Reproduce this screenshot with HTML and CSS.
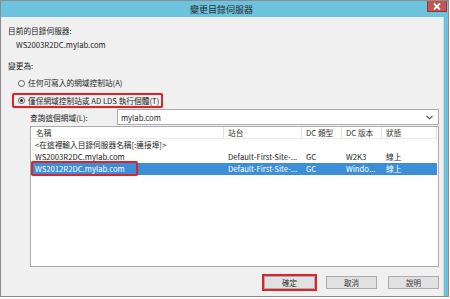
FILE: index.html
```html
<!DOCTYPE html>
<html lang="zh-Hant">
<head>
    <meta charset="UTF-8">
    <title>變更目錄伺服器</title>
    <link rel="stylesheet" href="styles.css">
</head>
<body>

<div class="window">
    <!-- Title bar -->
    <div class="titlebar">
        <span class="title">變更目錄伺服器</span>
        <span class="close">
            <svg width="8" height="7" viewBox="0 0 8 7"><path d="M1 0.5 L7 6.5 M7 0.5 L1 6.5" stroke="#fff" stroke-width="1.8"/></svg>
        </span>
    </div>

    <div class="frame">
        <div class="content">
            <div class="label first">目前的目錄伺服器:</div>
            <div class="label server">WS2003R2DC.mylab.com</div>
            <div class="label change">變更為:</div>

            <div class="radio">
                <span class="dot"></span>任何可寫入的網域控制站(A)
            </div>
            <div class="radio picked marked">
                <span class="dot on"></span>僅保網域控制站或 AD LDS 執行個體(T)
            </div>

            <div class="domain">
                <span class="domain-label">查詢這個網域(L):</span>
                <div class="combo">
                    <span>mylab.com</span>
                    <svg width="7" height="5" viewBox="0 0 7 5"><path d="M0.5 0.8 L3.5 3.8 L6.5 0.8" stroke="#444" stroke-width="1.1" fill="none"/></svg>
                </div>
            </div>

            <!-- Server list -->
            <div class="list">
                <div class="row head">
                    <span>名稱</span>
                    <span>站台</span>
                    <span>DC 類型</span>
                    <span>DC 版本</span>
                    <span>狀態</span>
                </div>
                <div class="row">
                    <span class="wide">&lt;在這裡輸入目錄伺服器名稱[:連接埠]&gt;</span>
                </div>
                <div class="row">
                    <span>WS2003R2DC.mylab.com</span>
                    <span>Default-First-Site-...</span>
                    <span>GC</span>
                    <span>W2K3</span>
                    <span>線上</span>
                </div>
                <div class="row selected">
                    <span><em class="marked name-mark">WS2012R2DC.mylab.com</em></span>
                    <span>Default-First-Site-...</span>
                    <span>GC</span>
                    <span>Windo...</span>
                    <span>線上</span>
                </div>
            </div>

            <div class="buttons">
                <button class="ok">確定</button>
                <button>取消</button>
                <button>說明</button>
            </div>
        </div>
        <div class="edge"></div>
    </div>
</div>

</body>
</html>
```

FILE: styles.css
```css
body {
    margin: 0;
    background: #fff;
    font-family: "Noto Sans CJK TC", "Noto Sans", sans-serif;
    font-size: 7.7px;
    color: #1e1e1e;
}
.window {
    width: 449px;
    height: 297px;
    border: 1px solid #8c8c8c;
    box-sizing: border-box;
    display: flex;
    flex-direction: column;
}
.titlebar {
    height: 16px;
    background: #6bc3de;
    display: flex;
    align-items: center;
    justify-content: center;
    position: relative;
}
.title {
    font-size: 9px;
    color: #2a2a2a;
    margin-left: -6px;
}
.close {
    position: absolute;
    right: 1px;
    top: 0;
    width: 20px;
    height: 11px;
    background: #c75450;
    border: 1px solid #8e3b38;
    border-top: none;
    box-sizing: border-box;
    display: flex;
    align-items: center;
    justify-content: center;
}
.frame {
    flex: 1;
    display: flex;
}
.content {
    flex: 1;
    background: #f0f0f0;
    padding: 0 4px 0 7px;
    display: flex;
    flex-direction: column;
    border-right: 1px solid #d9d9d9;
}
.edge {
    width: 5px;
    background: #6bc3de;
}
.label {
    line-height: 12px;
}
.first { margin-top: 8px; }
.server { margin-top: 2px; padding-left: 8px; }
.change { margin-top: 9px; }

.radio {
    margin-top: 5px;
    padding-left: 10px;
    line-height: 12px;
    display: flex;
    align-items: center;
    white-space: nowrap;
}
.dot {
    width: 7px;
    height: 7px;
    border: 1px solid #555;
    border-radius: 50%;
    background: #fff;
    box-sizing: border-box;
    margin-right: 3px;
    position: relative;
}
.dot.on::after {
    content: "";
    position: absolute;
    left: 1px;
    top: 1px;
    width: 3px;
    height: 3px;
    border-radius: 50%;
    background: #222;
}
.marked {
    border: 2px solid #d8262c;
    border-radius: 2px;
    box-shadow: 0 0 1px rgba(120, 0, 0, 0.5);
}
.radio.picked {
    margin-top: 4px;
    margin-left: 4px;
    padding-left: 4px;
    width: 151px;
    height: 15px;
    box-sizing: border-box;
    line-height: 11px;
}

.domain {
    margin-top: 1px;
    margin-left: 22px;
    height: 16px;
    display: flex;
    align-items: center;
}
.domain-label {
    width: 87px;
}
.combo {
    flex: 1;
    height: 16px;
    background: #fff;
    border: 1px solid #abadb3;
    box-sizing: border-box;
    display: flex;
    align-items: center;
    justify-content: space-between;
    padding: 0 5px 0 3px;
}

.list {
    margin-top: 1px;
    margin-left: 22px;
    height: 141px;
    background: #fff;
    border: 1px solid #abadb3;
    box-sizing: border-box;
}
.row {
    display: grid;
    grid-template-columns: 193px 78px 40px 40px 55px;
    height: 12px;
    line-height: 12px;
    white-space: nowrap;
}
.row span {
    padding-left: 4px;
}
.row .wide {
    grid-column: 1 / 6;
}
.head {
    height: 11px;
    line-height: 11px;
    color: #333;
    border-bottom: 1px solid #ececec;
}
.head span {
    border-right: 1px solid #e3e3e3;
}
.head span:first-child {
    padding-left: 5px;
}
.selected {
    background: #3c8fd6;
    color: #fff;
    margin-right: 1px;
}
.selected span:first-child {
    padding-left: 0;
}
.name-mark {
    font-style: normal;
    display: inline-block;
    height: 15px;
    line-height: 11px;
    margin-top: -2px;
    padding: 0 4px 0 2px;
    box-sizing: border-box;
    width: 107px;
}

.buttons {
    margin-top: 9px;
    display: flex;
    justify-content: flex-end;
    gap: 11px;
}
button {
    width: 51px;
    height: 13px;
    padding: 0;
    background: #e1e1e1;
    border: 1px solid #adadad;
    font-family: inherit;
    font-size: 7.5px;
    color: #333;
    line-height: 11px;
}
.ok {
    outline: 2px solid #d8262c;
    outline-offset: 0;
}
```
